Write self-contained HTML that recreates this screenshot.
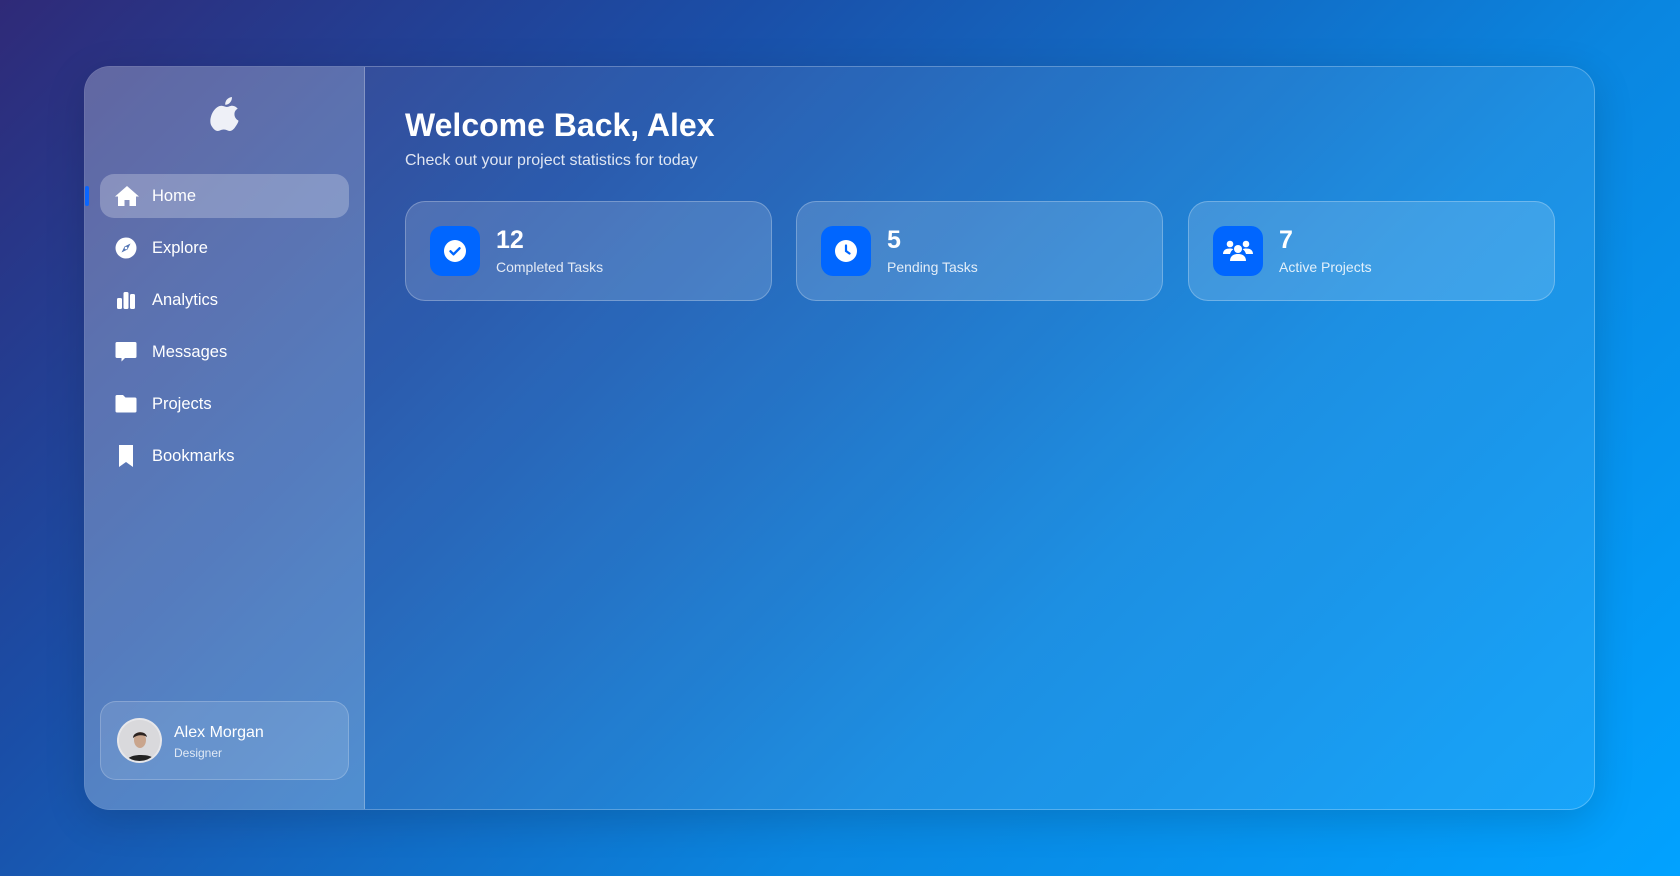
<!DOCTYPE html>
<html><head><meta charset="utf-8"><style>
*{margin:0;padding:0;box-sizing:border-box}
html,body{width:1680px;height:876px;overflow:hidden}
body{font-family:"Liberation Sans",sans-serif;color:#fff;background:linear-gradient(135deg,#2f2a78 0%,#1a4fa8 30%,#0a86e0 65%,#02a2ff 100%);position:relative}
.panel{position:absolute;left:84px;top:66px;width:1511px;height:744px;border-radius:26px;background:rgba(255,255,255,0.08);border:1px solid rgba(255,255,255,0.25);overflow:hidden;box-shadow:0 10px 40px rgba(0,0,0,0.15)}
.side{position:absolute;left:0;top:0;width:280px;height:100%;background:rgba(255,255,255,0.2);border-right:1px solid rgba(255,255,255,0.25)}
.logo{position:absolute;left:124px;top:30px}
.nav{position:absolute;left:15px;width:249px;height:44px;border-radius:14px;display:flex;align-items:center;font-size:16.5px}
.nav.active{background:rgba(255,255,255,0.25)}
.nav svg{position:absolute;left:15px}
.nav span{position:absolute;left:52px}
.ind{position:absolute;left:0;top:119px;width:4px;height:20px;background:#0a66ff;border-radius:2px}
.user{position:absolute;left:15px;top:634px;width:249px;height:79px;border-radius:16px;background:rgba(255,255,255,0.12);border:1px solid rgba(255,255,255,0.2)}
.av{position:absolute;left:16px;top:16px;width:45px;height:45px;border-radius:50%;background:#d8d8dc;border:2px solid rgba(255,255,255,0.4);overflow:hidden}
h1{position:absolute;left:320px;top:40px;font-size:32px;font-weight:bold}
.sub{position:absolute;left:320px;top:85px;font-size:16px;color:rgba(255,255,255,0.85)}
.card{position:absolute;top:134px;width:367px;height:100px;border-radius:20px;background:rgba(255,255,255,0.15);border:1px solid rgba(255,255,255,0.25)}
.ib{position:absolute;left:24px;top:24px;width:50px;height:50px;border-radius:12px;background:#0066ff;display:flex;align-items:center;justify-content:center}
.num{position:absolute;left:90px;top:24px;font-size:25px;font-weight:bold}
.lbl{position:absolute;left:90px;top:57px;font-size:14px;color:rgba(255,255,255,0.85)}
</style></head><body>
<div class="panel">
 <div class="side">
  <svg class="logo" width="30" height="34" viewBox="0 0 24 28" fill="#eef0f7"><path d="M16.5 0c.2 1.8-.5 3.4-1.5 4.5-1 1.2-2.5 2-4 1.9-.2-1.7.6-3.4 1.5-4.4C13.5.9 15.2.1 16.5 0zM21.8 20.3c-.7 1.5-1 2.2-1.9 3.5-1.2 1.9-3 4.200-5.100 4.200-1.900 0-2.400-1.200-5-1.200s-3.100 1.200-5 1.200C2.700 28 1 25.900-.2 24 -3.500 18.800 1.500 7.200 8 7.200c1.700 0 2.900 1 4.400 1 1.400 0 2.300-1 4.400-1 1.600 0 3.300.9 4.500 2.400-4 2.200-3.300 7.900.5 9.700z" transform="translate(2 0)"/></svg>
  <div class="ind"></div>
  <div class="nav active" style="top:107px"><svg width="24" height="22" viewBox="0 0 24 22" fill="#fff"><path d="M12 1 0 11.5h3V21h6.5v-6h5v6H21v-9.5h3z"/></svg><span>Home</span></div>
  <div class="nav" style="top:159px"><svg width="22" height="22" viewBox="0 0 22 22"><circle cx="11" cy="11" r="10.5" fill="#fff"/><path d="M15.5 6.5 12.5 12.5 6.5 15.5 9.5 9.5z" fill="#5577b5"/><circle cx="11" cy="11" r="1.3" fill="#fff"/></svg><span>Explore</span></div>
  <div class="nav" style="top:211px"><svg width="22" height="22" viewBox="0 0 22 22" fill="#fff"><rect x="2" y="9" width="5" height="11" rx="1.5"/><rect x="8.5" y="3" width="5" height="17" rx="1.5"/><rect x="15" y="5" width="5" height="15" rx="1.5"/></svg><span>Analytics</span></div>
  <div class="nav" style="top:263px"><svg width="22" height="22" viewBox="0 0 22 22" fill="#fff"><path d="M2 1h18a1.5 1.5 0 0 1 1.5 1.5v13A1.5 1.5 0 0 1 20 17H10l-3.5 3.5V17H2A1.5 1.5 0 0 1 .5 15.5v-13A1.5 1.5 0 0 1 2 1z"/></svg><span>Messages</span></div>
  <div class="nav" style="top:315px"><svg width="22" height="22" viewBox="0 0 22 22" fill="#fff"><path d="M2 2h6l2.5 2.5H20a1.5 1.5 0 0 1 1.5 1.5v12a1.5 1.5 0 0 1-1.5 1.5H2A1.5 1.5 0 0 1 .5 18V3.5A1.5 1.5 0 0 1 2 2z"/></svg><span>Projects</span></div>
  <div class="nav" style="top:367px"><svg width="22" height="22" viewBox="0 0 22 22" fill="#fff"><path d="M4 0h14v22l-7-5-7 5z"/></svg><span>Bookmarks</span></div>
  <div class="user">
   <div class="av"><svg width="45" height="45" viewBox="0 0 45 45"><rect width="45" height="45" fill="#d9d9dc"/><path d="M5 45c2-8 9-10 17-10s15 2 17 10z" fill="#222"/><ellipse cx="21" cy="20" rx="6" ry="8" fill="#c9a58d"/><path d="M14 18c0-7 13-8 14-1-3-2-9-3-14 1z" fill="#2a2220"/></svg></div>
   <div style="position:absolute;left:73px;top:22px;font-size:16px">Alex Morgan</div>
   <div style="position:absolute;left:73px;top:44px;font-size:12px;color:rgba(255,255,255,0.8)">Designer</div>
  </div>
 </div>
 <h1>Welcome Back, Alex</h1>
 <div class="sub">Check out your project statistics for today</div>
 <div class="card" style="left:320px"><div class="ib"><svg width="24" height="24" viewBox="0 0 24 24"><circle cx="12" cy="12" r="11" fill="#fff"/><path d="M7.5 12.3l3 3 6-6" stroke="#0066ff" stroke-width="2.4" fill="none" stroke-linecap="round" stroke-linejoin="round"/></svg></div><div class="num">12</div><div class="lbl">Completed Tasks</div></div>
 <div class="card" style="left:711px"><div class="ib"><svg width="24" height="24" viewBox="0 0 24 24"><circle cx="12" cy="12" r="11" fill="#fff"/><path d="M12 6.5V12l3.5 2.5" stroke="#0066ff" stroke-width="2.2" fill="none" stroke-linecap="round"/></svg></div><div class="num">5</div><div class="lbl">Pending Tasks</div></div>
 <div class="card" style="left:1103px"><div class="ib"><svg width="30" height="24" viewBox="0 0 30 24" fill="#fff"><circle cx="7" cy="5" r="3.3"/><circle cx="23" cy="5" r="3.3"/><circle cx="15" cy="10" r="4"/><path d="M0 15c0-4 3-5.5 7-5.5 1.5 0 2.5.3 3.300.7-1.800 1.200-2.800 3-3.300 4.800z"/><path d="M30 15c0-4-3-5.5-7-5.5-1.500 0-2.500.3-3.300.7 1.800 1.200 2.800 3 3.300 4.800z"/><path d="M7 22c0-5 3.5-7 8-7s8 2 8 7z"/></svg></div><div class="num">7</div><div class="lbl">Active Projects</div></div>
</div>
</body></html>
